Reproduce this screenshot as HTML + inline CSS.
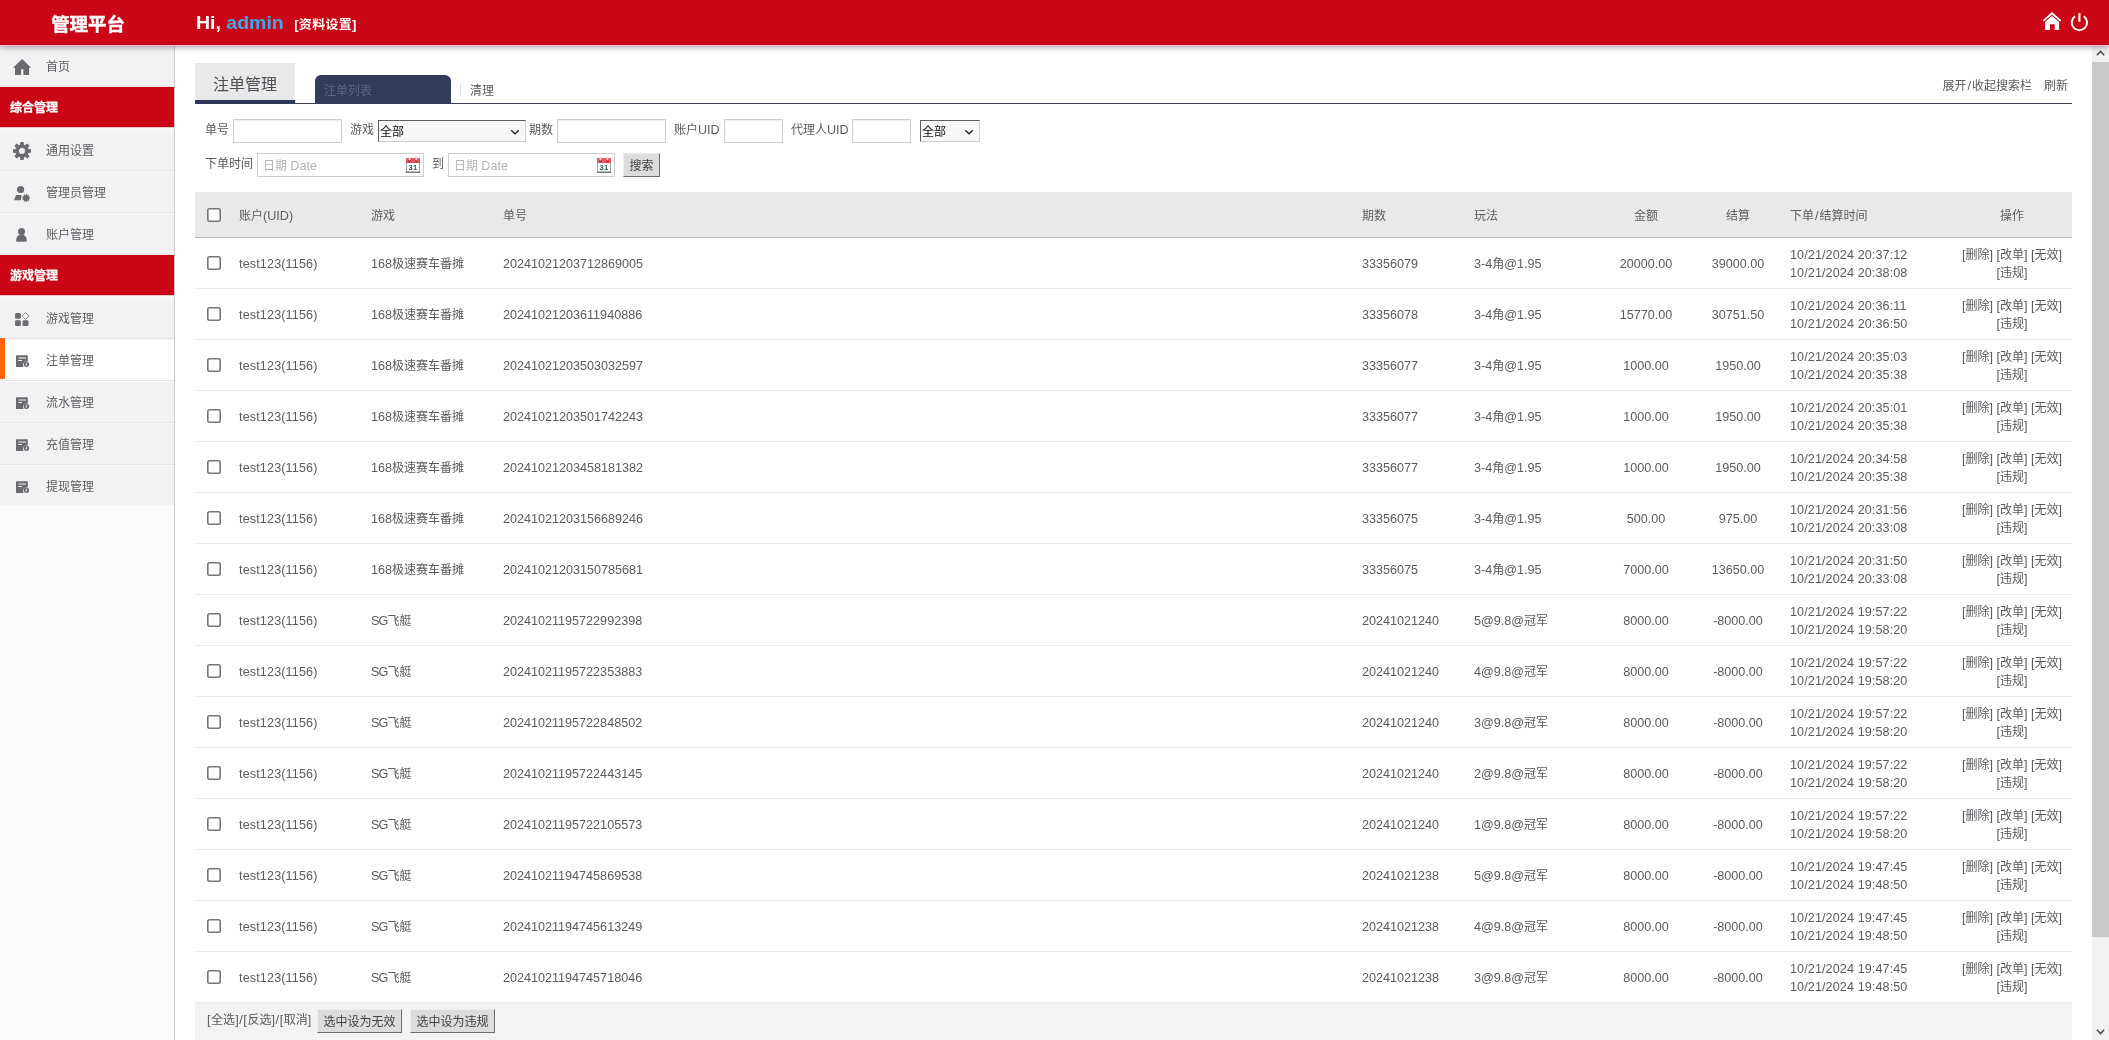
<!DOCTYPE html>
<html lang="zh-CN"><head><meta charset="utf-8"><title>管理平台</title>
<style>
*{box-sizing:border-box;margin:0;padding:0}
html,body{width:2109px;height:1040px;overflow:hidden;background:#fff}
body{position:relative;font-family:"Liberation Sans","Noto Sans CJK SC",sans-serif;font-size:12px;color:#5b5b60;line-height:18px}
.l{font-size:12.6px}
#top{position:absolute;left:0;top:0;width:2109px;height:45px;background:#cb0717;border-bottom:1px solid #b10a18;box-shadow:0 1px 0 #fbb9bf,0 2px 6px rgba(60,60,70,.5);z-index:5;color:#fff}
#top .logo{position:absolute;left:0;top:0;width:174px;height:44px;line-height:50px;text-align:center;font-size:18.4px;font-weight:bold;letter-spacing:0px;padding-left:2px;-webkit-text-stroke:.4px #fff}
#top .hi{position:absolute;left:196px;top:0;height:44px;line-height:46px;font-size:18.6px;font-weight:bold;white-space:nowrap;transform:scaleX(1.048);transform-origin:0 0}
#top .hi b{color:#38a9ea}
#top .hi em{font-style:normal;font-size:12.4px;letter-spacing:.3px;font-weight:bold;margin-left:10px;position:relative;top:0px}
#top svg{position:absolute}
#side{position:absolute;left:0;top:45px;width:175px;height:995px;background:#fbfafc;border-right:1px solid #cbcace;z-index:1}
#side ul{will-change:transform}
#side ul{list-style:none}
#side li{position:relative;height:42px;width:174px}
#side li.it{background:#f2f1f3;border-top:1px solid #f7f6f8;border-bottom:1px solid #e4e3e6;line-height:43px;padding-left:46px;color:#5e5d62}
#side li.it:last-child{height:41px;border-bottom:1px solid #f7f6f8}
#side li.it.on{background:#fff}
#side li.it.on:before{content:"";position:absolute;left:0;top:-2px;width:5px;height:41px;background:#ff6600}
#side li.it span{display:inline-block;transform:translateY(-.5px)}
#side li.hd{background:#cb0717;color:#fff;font-weight:bold;-webkit-text-stroke:.25px #fff;height:42px;line-height:43px;padding-left:10px;box-shadow:inset 0 -1px 0 #faf3f4,inset 0 -2px 0 #f8c3c8,inset 0 -3px 0 #b90a18}
.ic{position:absolute}
#sb{position:absolute;left:2092px;top:44px;width:17px;height:996px;background:#f1f0f2;z-index:2}
#sb .th{position:absolute;left:0;top:18px;width:17px;height:875px;background:#c9c8cb}
#sb svg{position:absolute;left:4px}
#main{position:absolute;left:195px;top:0;width:1877px;height:1040px;will-change:transform}
.tabs{position:absolute;left:0;top:63px;width:1877px;height:41px;border-bottom:1px solid #3a3f57}
.tabs .t1{position:absolute;left:0;top:0;width:100px;height:41px;background:#e9e8ea;border-bottom:4px solid #2f3858;font-size:16px;color:#4e4d52;text-align:center;line-height:44px}
.tabs .t2{position:absolute;left:120px;top:12px;width:136px;height:29px;background:#323b5c;border-radius:6px 6px 0 0;color:#5c6686;line-height:32px;padding-left:9px}
.tabs .sep{position:absolute;left:265px;top:21px;width:1px;height:13px;background:#dcdcdc}
.tabs .t3{position:absolute;left:275px;top:19px;line-height:18px}
.tabs .r{position:absolute;right:4px;top:14px;line-height:18px;white-space:nowrap}
.tabs .r span{margin-left:12px}
.tabs .r i{font-style:normal;padding:0 1px}
.f{position:absolute;white-space:nowrap;line-height:18px}
.inp{position:absolute;height:24px;border:1px solid #cfcfcf;background:#fff;box-shadow:inset 0 1px 2px rgba(0,0,0,.07)}
.sel{position:absolute;height:22px;border:1px solid;border-color:#5f5f5f #cfcfd2 #cfcfd2 #5f5f5f;background:#f8f8fa;color:#111;line-height:22px;padding-left:1px;font-size:12px}
.sel .chev{position:absolute;right:5px;top:8px}
.dt{position:absolute;height:24px;width:167px;border:1px solid #cfcfcf;background:#fff;color:#b4b4b4;line-height:24px;padding-left:5px}
.dt .cal{position:absolute;right:2px;top:3px}
.btn{position:absolute;height:24px;background:#dcdbdd;border:1px solid;border-color:#ececec #6e6e6e #6e6e6e #ececec;box-shadow:1px 1px 0 #9a9a9a inset -1px -1px 0;color:#444;text-align:center;line-height:24px}
table{position:absolute;left:0;top:192px;width:1877px;border-collapse:collapse;table-layout:fixed}
th{height:45px;background:#e9e8ea;border-bottom:1px solid #bcbcc0;font-weight:normal;text-align:left;padding:4px 8px 0;color:#5e5d62}
td{height:51px;border-bottom:1px solid #ececee;padding:2px 8px 0;vertical-align:middle;white-space:nowrap}
th.c,td.c{text-align:center}
td.ck,th.ck{padding:0 0 0 12px}
th.ck{padding-top:1px}
.ls{letter-spacing:.14px}
.sg{letter-spacing:-.8px}
.lt{letter-spacing:.1px}
.lf{letter-spacing:.6px}
.cb{display:block;width:14px;height:14px}
#foot{position:absolute;left:0;top:1003px;width:1877px;height:37px;background:#f3f2f4}
</style></head><body>
<div id="top">
  <div class="logo">管理平台</div>
  <div class="hi">Hi, <b>admin</b><em>[资料设置]</em></div>
  <svg style="left:2042px;top:11px" width="20" height="20" viewBox="0 0 20 20"><path d="M1.3 9.9 L10 2.3 L18.7 9.9" fill="none" stroke="#fff" stroke-width="1.9"/><path fill="#fff" d="M10 4.8 L17.1 11 L17.1 19.1 L12.7 19.1 L12.7 13.2 L8 13.2 L8 19.1 L3.1 19.1 L3.1 11 Z"/></svg>
  <svg style="left:2069px;top:11px" width="21" height="22" viewBox="0 0 21 22"><path d="M14.79 5.23 A7.65 7.65 0 1 1 6.01 5.23" fill="none" stroke="#fff" stroke-width="2"/><path d="M10.4 2.1 L10.4 10.8" stroke="#fff" stroke-width="2.1"/></svg>
</div>
<div id="side"><ul><li class="it "><svg class="ic" style="left:12px;top:12px" width="20" height="18" viewBox="0 0 20 18"><path fill="#6b6a6f" d="M10.3 1.1 L19 9.7 L17.1 9.7 L17.1 16.9 L11.4 16.9 L11.4 11.2 L9.1 11.2 L9.1 16.9 L3 16.9 L3 9.7 L0.9 9.7 Z"/></svg><span>首页</span></li><li class="hd">综合管理</li><li class="it "><svg class="ic" style="left:12px;top:11px" width="20" height="20" viewBox="0 0 20 20"><path fill="#6b6a6f" fill-rule="evenodd" d="M16.30 8.04 L19.04 8.31 L19.04 11.69 L16.30 11.96 L15.84 13.07 L17.59 15.20 L15.20 17.59 L13.07 15.84 L11.96 16.30 L11.69 19.04 L8.31 19.04 L8.04 16.30 L6.93 15.84 L4.80 17.59 L2.41 15.20 L4.16 13.07 L3.70 11.96 L0.96 11.69 L0.96 8.31 L3.70 8.04 L4.16 6.93 L2.41 4.80 L4.80 2.41 L6.93 4.16 L8.04 3.70 L8.31 0.96 L11.69 0.96 L11.96 3.70 L13.07 4.16 L15.20 2.41 L17.59 4.80 L15.84 6.93 Z M7.00 10.00 a3.00 3.00 0 1 0 6.00 0 a3.00 3.00 0 1 0 -6.00 0 Z"/></svg><span>通用设置</span></li><li class="it "><svg class="ic" style="left:13px;top:13px" width="18" height="18" viewBox="0 0 18 18"><circle cx="7.6" cy="4.5" r="3.6" fill="#6b6a6f"/><path fill="#6b6a6f" d="M3.1 10.1 L8.7 10.1 L7.8 15.2 L0.9 15.2 Z"/><path fill="#6b6a6f" d="M15.91 12.27 L16.93 12.25 L16.93 13.75 L15.91 13.73 L15.72 14.25 L16.52 14.88 L15.55 16.04 L14.78 15.36 L14.30 15.64 L14.51 16.64 L13.02 16.90 L12.87 15.89 L12.33 15.79 L11.84 16.69 L10.53 15.94 L11.07 15.07 L10.71 14.64 L9.76 15.02 L9.25 13.60 L10.21 13.28 L10.21 12.72 L9.25 12.40 L9.76 10.98 L10.71 11.36 L11.07 10.93 L10.53 10.06 L11.84 9.31 L12.33 10.21 L12.87 10.11 L13.02 9.10 L14.51 9.36 L14.30 10.36 L14.78 10.64 L15.55 9.96 L16.52 11.12 L15.72 11.75 Z"/></svg><span>管理员管理</span></li><li class="it "><svg class="ic" style="left:15px;top:12px" width="14" height="17" viewBox="0 0 14 17"><circle cx="6.5" cy="5.4" r="3.5" fill="#6b6a6f"/><path fill="#6b6a6f" d="M1.1 14.5 Q1.1 9.2 6.45 8.6 Q11.8 9.2 11.8 14.5 Q11.8 15.7 10.6 15.7 L2.3 15.7 Q1.1 15.7 1.1 14.5 Z"/></svg><span>账户管理</span></li><li class="hd">游戏管理</li><li class="it "><svg class="ic" style="left:15px;top:14px" width="15" height="15" viewBox="0 0 15 15"><rect x="0.1" y="0.9" width="5.8" height="5.8" rx="1.3" fill="#6b6a6f"/><rect x="0.1" y="8.3" width="5.8" height="5.7" rx="1.3" fill="#6b6a6f"/><rect x="7.5" y="8.3" width="5.9" height="5.7" rx="1.3" fill="#6b6a6f"/><path d="M10.5 0.6 L13.9 4 L10.5 7.4 L7.1 4 Z" fill="none" stroke="#6b6a6f" stroke-width="0.8" stroke-linejoin="round"/></svg><span>游戏管理</span></li><li class="it on"><svg class="ic" style="left:16px;top:15px" width="14" height="13" viewBox="0 0 14 13"><path fill="#6b6a6f" d="M0.8 0.2 L11 0.2 Q11.8 0.2 11.8 1 L11.8 6.4 Q8 5.6 7 9 Q6.8 10.6 7.6 12 L0 12 L0 1 Q0 0.2 0.8 0.2 Z M2.4 2.4 L2.4 3.6 L10 3.6 L10 2.4 Z M2.4 5 L2.4 6 L6 6 L6 5 Z"/><circle cx="10.4" cy="9.3" r="2.7" fill="#6b6a6f"/><path d="M10.9 7.8 L9.9 10.8" stroke="#fff" stroke-width="0.9"/></svg><span>注单管理</span></li><li class="it "><svg class="ic" style="left:16px;top:15px" width="14" height="13" viewBox="0 0 14 13"><path fill="#6b6a6f" d="M0.8 0.2 L11 0.2 Q11.8 0.2 11.8 1 L11.8 6.4 Q8 5.6 7 9 Q6.8 10.6 7.6 12 L0 12 L0 1 Q0 0.2 0.8 0.2 Z M2.4 2.4 L2.4 3.6 L10 3.6 L10 2.4 Z M2.4 5 L2.4 6 L6 6 L6 5 Z"/><circle cx="10.4" cy="9.3" r="2.7" fill="#6b6a6f"/><path d="M10.9 7.8 L9.9 10.8" stroke="#fff" stroke-width="0.9"/></svg><span>流水管理</span></li><li class="it "><svg class="ic" style="left:16px;top:15px" width="14" height="13" viewBox="0 0 14 13"><path fill="#6b6a6f" d="M0.8 0.2 L11 0.2 Q11.8 0.2 11.8 1 L11.8 6.4 Q8 5.6 7 9 Q6.8 10.6 7.6 12 L0 12 L0 1 Q0 0.2 0.8 0.2 Z M2.4 2.4 L2.4 3.6 L10 3.6 L10 2.4 Z M2.4 5 L2.4 6 L6 6 L6 5 Z"/><circle cx="10.4" cy="9.3" r="2.7" fill="#6b6a6f"/><path d="M10.9 7.8 L9.9 10.8" stroke="#fff" stroke-width="0.9"/></svg><span>充值管理</span></li><li class="it "><svg class="ic" style="left:16px;top:15px" width="14" height="13" viewBox="0 0 14 13"><path fill="#6b6a6f" d="M0.8 0.2 L11 0.2 Q11.8 0.2 11.8 1 L11.8 6.4 Q8 5.6 7 9 Q6.8 10.6 7.6 12 L0 12 L0 1 Q0 0.2 0.8 0.2 Z M2.4 2.4 L2.4 3.6 L10 3.6 L10 2.4 Z M2.4 5 L2.4 6 L6 6 L6 5 Z"/><circle cx="10.4" cy="9.3" r="2.7" fill="#6b6a6f"/><path d="M10.9 7.8 L9.9 10.8" stroke="#fff" stroke-width="0.9"/></svg><span>提现管理</span></li></ul></div>
<div id="sb"><svg style="top:6px" width="9" height="6" viewBox="0 0 9 6"><path d="M0.8 5.2 L4.5 1.4 L8.2 5.2" fill="none" stroke="#4f4f52" stroke-width="1.5"/></svg><div class="th"></div><svg style="top:985px" width="9" height="6" viewBox="0 0 9 6"><path d="M0.8 0.8 L4.5 4.6 L8.2 0.8" fill="none" stroke="#4f4f52" stroke-width="1.5"/></svg></div>
<div id="main">
  <div class="tabs"><div class="t1">注单管理</div><div class="t2">注单列表</div><div class="sep"></div><div class="t3">清理</div><div class="r">展开<i class="l">/</i>收起搜索栏<span>刷新</span></div></div>
  <div class="f" style="left:10px;top:121px">单号</div><div class="inp" style="left:38px;top:119px;width:109px"></div>
  <div class="f" style="left:155px;top:121px">游戏</div><div class="sel" style="left:183px;top:120px;width:148px">全部<svg class="chev" width="10" height="6" viewBox="0 0 10 6"><path d="M1.2 1.2 L5 4.8 L8.8 1.2" fill="none" stroke="#222" stroke-width="1.3"/></svg></div>
  <div class="f" style="left:334px;top:121px">期数</div><div class="inp" style="left:362px;top:119px;width:109px"></div>
  <div class="f" style="left:479px;top:121px">账户<span class="l">UID</span></div><div class="inp" style="left:529px;top:119px;width:59px"></div>
  <div class="f" style="left:596px;top:121px">代理人<span class="l">UID</span></div><div class="inp" style="left:657px;top:119px;width:59px"></div>
  <div class="sel" style="left:725px;top:120px;width:60px">全部<svg class="chev" width="10" height="6" viewBox="0 0 10 6"><path d="M1.2 1.2 L5 4.8 L8.8 1.2" fill="none" stroke="#222" stroke-width="1.3"/></svg></div>
  <div class="f" style="left:10px;top:155px">下单时间</div><div class="dt" style="left:62px;top:153px">日期 <span class="l">Date</span><svg class="cal" width="16" height="16" viewBox="0 0 16 16"><rect x="1.4" y="1.6" width="13.2" height="13.6" fill="#fff" stroke="#8f8a8c" stroke-width="0.8"/><rect x="1" y="1.2" width="14" height="4.6" fill="#ea5560"/><rect x="1" y="4.9" width="14" height="0.9" fill="#d9414d"/><rect x="0.9" y="14.7" width="14.2" height="1" fill="#5e5a5c"/><rect x="3.4" y="3" width="2.2" height="1.7" rx="0.8" fill="#8c1218"/><rect x="10.2" y="3" width="2.2" height="1.7" rx="0.8" fill="#8c1218"/><rect x="3.7" y="0.1" width="1.6" height="3.4" rx="0.8" fill="#fde4e4" stroke="#d88" stroke-width="0.4"/><rect x="10.5" y="0.1" width="1.6" height="3.4" rx="0.8" fill="#fde4e4" stroke="#d88" stroke-width="0.4"/><text x="8" y="12.9" font-family="Liberation Sans, sans-serif" font-size="7.6" font-weight="bold" text-anchor="middle" letter-spacing="0.4" fill="#2e5c52">31</text></svg></div>
  <div class="f" style="left:237px;top:155px">到</div><div class="dt" style="left:253px;top:153px">日期 <span class="l">Date</span><svg class="cal" width="16" height="16" viewBox="0 0 16 16"><rect x="1.4" y="1.6" width="13.2" height="13.6" fill="#fff" stroke="#8f8a8c" stroke-width="0.8"/><rect x="1" y="1.2" width="14" height="4.6" fill="#ea5560"/><rect x="1" y="4.9" width="14" height="0.9" fill="#d9414d"/><rect x="0.9" y="14.7" width="14.2" height="1" fill="#5e5a5c"/><rect x="3.4" y="3" width="2.2" height="1.7" rx="0.8" fill="#8c1218"/><rect x="10.2" y="3" width="2.2" height="1.7" rx="0.8" fill="#8c1218"/><rect x="3.7" y="0.1" width="1.6" height="3.4" rx="0.8" fill="#fde4e4" stroke="#d88" stroke-width="0.4"/><rect x="10.5" y="0.1" width="1.6" height="3.4" rx="0.8" fill="#fde4e4" stroke="#d88" stroke-width="0.4"/><text x="8" y="12.9" font-family="Liberation Sans, sans-serif" font-size="7.6" font-weight="bold" text-anchor="middle" letter-spacing="0.4" fill="#2e5c52">31</text></svg></div>
  <div class="btn" style="left:428px;top:153px;width:37px">搜索</div>
  <table><colgroup><col style="width:36px"><col style="width:132px"><col style="width:132px"><col><col style="width:112px"><col style="width:132px"><col style="width:96px"><col style="width:88px"><col style="width:170px"><col style="width:120px"></colgroup>
  <tr><th class="ck"><svg class="cb" width="14" height="14" viewBox="0 0 14 14"><rect x="0.8" y="0.8" width="12.4" height="12.4" rx="1.7" fill="#fff" stroke="#77767d" stroke-width="1.6"/></svg></th><th>账户<span class="l">(UID)</span></th><th>游戏</th><th>单号</th><th>期数</th><th>玩法</th><th class="c">金额</th><th class="c">结算</th><th>下单<span class="l" style="padding:0 1px">/</span>结算时间</th><th class="c">操作</th></tr>
  <tr><td class="ck"><svg class="cb" width="14" height="14" viewBox="0 0 14 14"><rect x="0.8" y="0.8" width="12.4" height="12.4" rx="1.7" fill="#fff" stroke="#77767d" stroke-width="1.6"/></svg></td><td><span class="l ls">test123(1156)</span></td><td><span class="l">168</span>极速赛车番摊</td><td><span class="l">20241021203712869005</span></td><td><span class="l">33356079</span></td><td><span class="l">3-4</span>角<span class="l">@1.95</span></td><td class="c"><span class="l">20000.00</span></td><td class="c"><span class="l">39000.00</span></td><td><span class="l lt">10/21/2024 20:37:12</span><br><span class="l lt">10/21/2024 20:38:08</span></td><td class="c op"><span class="l">[</span>删除<span class="l">] [</span>改单<span class="l">] [</span>无效<span class="l">]</span><br><span class="l">[</span>违规<span class="l">]</span></td></tr>
<tr><td class="ck"><svg class="cb" width="14" height="14" viewBox="0 0 14 14"><rect x="0.8" y="0.8" width="12.4" height="12.4" rx="1.7" fill="#fff" stroke="#77767d" stroke-width="1.6"/></svg></td><td><span class="l ls">test123(1156)</span></td><td><span class="l">168</span>极速赛车番摊</td><td><span class="l">20241021203611940886</span></td><td><span class="l">33356078</span></td><td><span class="l">3-4</span>角<span class="l">@1.95</span></td><td class="c"><span class="l">15770.00</span></td><td class="c"><span class="l">30751.50</span></td><td><span class="l lt">10/21/2024 20:36:11</span><br><span class="l lt">10/21/2024 20:36:50</span></td><td class="c op"><span class="l">[</span>删除<span class="l">] [</span>改单<span class="l">] [</span>无效<span class="l">]</span><br><span class="l">[</span>违规<span class="l">]</span></td></tr>
<tr><td class="ck"><svg class="cb" width="14" height="14" viewBox="0 0 14 14"><rect x="0.8" y="0.8" width="12.4" height="12.4" rx="1.7" fill="#fff" stroke="#77767d" stroke-width="1.6"/></svg></td><td><span class="l ls">test123(1156)</span></td><td><span class="l">168</span>极速赛车番摊</td><td><span class="l">20241021203503032597</span></td><td><span class="l">33356077</span></td><td><span class="l">3-4</span>角<span class="l">@1.95</span></td><td class="c"><span class="l">1000.00</span></td><td class="c"><span class="l">1950.00</span></td><td><span class="l lt">10/21/2024 20:35:03</span><br><span class="l lt">10/21/2024 20:35:38</span></td><td class="c op"><span class="l">[</span>删除<span class="l">] [</span>改单<span class="l">] [</span>无效<span class="l">]</span><br><span class="l">[</span>违规<span class="l">]</span></td></tr>
<tr><td class="ck"><svg class="cb" width="14" height="14" viewBox="0 0 14 14"><rect x="0.8" y="0.8" width="12.4" height="12.4" rx="1.7" fill="#fff" stroke="#77767d" stroke-width="1.6"/></svg></td><td><span class="l ls">test123(1156)</span></td><td><span class="l">168</span>极速赛车番摊</td><td><span class="l">20241021203501742243</span></td><td><span class="l">33356077</span></td><td><span class="l">3-4</span>角<span class="l">@1.95</span></td><td class="c"><span class="l">1000.00</span></td><td class="c"><span class="l">1950.00</span></td><td><span class="l lt">10/21/2024 20:35:01</span><br><span class="l lt">10/21/2024 20:35:38</span></td><td class="c op"><span class="l">[</span>删除<span class="l">] [</span>改单<span class="l">] [</span>无效<span class="l">]</span><br><span class="l">[</span>违规<span class="l">]</span></td></tr>
<tr><td class="ck"><svg class="cb" width="14" height="14" viewBox="0 0 14 14"><rect x="0.8" y="0.8" width="12.4" height="12.4" rx="1.7" fill="#fff" stroke="#77767d" stroke-width="1.6"/></svg></td><td><span class="l ls">test123(1156)</span></td><td><span class="l">168</span>极速赛车番摊</td><td><span class="l">20241021203458181382</span></td><td><span class="l">33356077</span></td><td><span class="l">3-4</span>角<span class="l">@1.95</span></td><td class="c"><span class="l">1000.00</span></td><td class="c"><span class="l">1950.00</span></td><td><span class="l lt">10/21/2024 20:34:58</span><br><span class="l lt">10/21/2024 20:35:38</span></td><td class="c op"><span class="l">[</span>删除<span class="l">] [</span>改单<span class="l">] [</span>无效<span class="l">]</span><br><span class="l">[</span>违规<span class="l">]</span></td></tr>
<tr><td class="ck"><svg class="cb" width="14" height="14" viewBox="0 0 14 14"><rect x="0.8" y="0.8" width="12.4" height="12.4" rx="1.7" fill="#fff" stroke="#77767d" stroke-width="1.6"/></svg></td><td><span class="l ls">test123(1156)</span></td><td><span class="l">168</span>极速赛车番摊</td><td><span class="l">20241021203156689246</span></td><td><span class="l">33356075</span></td><td><span class="l">3-4</span>角<span class="l">@1.95</span></td><td class="c"><span class="l">500.00</span></td><td class="c"><span class="l">975.00</span></td><td><span class="l lt">10/21/2024 20:31:56</span><br><span class="l lt">10/21/2024 20:33:08</span></td><td class="c op"><span class="l">[</span>删除<span class="l">] [</span>改单<span class="l">] [</span>无效<span class="l">]</span><br><span class="l">[</span>违规<span class="l">]</span></td></tr>
<tr><td class="ck"><svg class="cb" width="14" height="14" viewBox="0 0 14 14"><rect x="0.8" y="0.8" width="12.4" height="12.4" rx="1.7" fill="#fff" stroke="#77767d" stroke-width="1.6"/></svg></td><td><span class="l ls">test123(1156)</span></td><td><span class="l">168</span>极速赛车番摊</td><td><span class="l">20241021203150785681</span></td><td><span class="l">33356075</span></td><td><span class="l">3-4</span>角<span class="l">@1.95</span></td><td class="c"><span class="l">7000.00</span></td><td class="c"><span class="l">13650.00</span></td><td><span class="l lt">10/21/2024 20:31:50</span><br><span class="l lt">10/21/2024 20:33:08</span></td><td class="c op"><span class="l">[</span>删除<span class="l">] [</span>改单<span class="l">] [</span>无效<span class="l">]</span><br><span class="l">[</span>违规<span class="l">]</span></td></tr>
<tr><td class="ck"><svg class="cb" width="14" height="14" viewBox="0 0 14 14"><rect x="0.8" y="0.8" width="12.4" height="12.4" rx="1.7" fill="#fff" stroke="#77767d" stroke-width="1.6"/></svg></td><td><span class="l ls">test123(1156)</span></td><td><span class="l sg">SG</span>飞艇</td><td><span class="l">20241021195722992398</span></td><td><span class="l">20241021240</span></td><td><span class="l">5@9.8@</span>冠军</td><td class="c"><span class="l">8000.00</span></td><td class="c"><span class="l">-8000.00</span></td><td><span class="l lt">10/21/2024 19:57:22</span><br><span class="l lt">10/21/2024 19:58:20</span></td><td class="c op"><span class="l">[</span>删除<span class="l">] [</span>改单<span class="l">] [</span>无效<span class="l">]</span><br><span class="l">[</span>违规<span class="l">]</span></td></tr>
<tr><td class="ck"><svg class="cb" width="14" height="14" viewBox="0 0 14 14"><rect x="0.8" y="0.8" width="12.4" height="12.4" rx="1.7" fill="#fff" stroke="#77767d" stroke-width="1.6"/></svg></td><td><span class="l ls">test123(1156)</span></td><td><span class="l sg">SG</span>飞艇</td><td><span class="l">20241021195722353883</span></td><td><span class="l">20241021240</span></td><td><span class="l">4@9.8@</span>冠军</td><td class="c"><span class="l">8000.00</span></td><td class="c"><span class="l">-8000.00</span></td><td><span class="l lt">10/21/2024 19:57:22</span><br><span class="l lt">10/21/2024 19:58:20</span></td><td class="c op"><span class="l">[</span>删除<span class="l">] [</span>改单<span class="l">] [</span>无效<span class="l">]</span><br><span class="l">[</span>违规<span class="l">]</span></td></tr>
<tr><td class="ck"><svg class="cb" width="14" height="14" viewBox="0 0 14 14"><rect x="0.8" y="0.8" width="12.4" height="12.4" rx="1.7" fill="#fff" stroke="#77767d" stroke-width="1.6"/></svg></td><td><span class="l ls">test123(1156)</span></td><td><span class="l sg">SG</span>飞艇</td><td><span class="l">20241021195722848502</span></td><td><span class="l">20241021240</span></td><td><span class="l">3@9.8@</span>冠军</td><td class="c"><span class="l">8000.00</span></td><td class="c"><span class="l">-8000.00</span></td><td><span class="l lt">10/21/2024 19:57:22</span><br><span class="l lt">10/21/2024 19:58:20</span></td><td class="c op"><span class="l">[</span>删除<span class="l">] [</span>改单<span class="l">] [</span>无效<span class="l">]</span><br><span class="l">[</span>违规<span class="l">]</span></td></tr>
<tr><td class="ck"><svg class="cb" width="14" height="14" viewBox="0 0 14 14"><rect x="0.8" y="0.8" width="12.4" height="12.4" rx="1.7" fill="#fff" stroke="#77767d" stroke-width="1.6"/></svg></td><td><span class="l ls">test123(1156)</span></td><td><span class="l sg">SG</span>飞艇</td><td><span class="l">20241021195722443145</span></td><td><span class="l">20241021240</span></td><td><span class="l">2@9.8@</span>冠军</td><td class="c"><span class="l">8000.00</span></td><td class="c"><span class="l">-8000.00</span></td><td><span class="l lt">10/21/2024 19:57:22</span><br><span class="l lt">10/21/2024 19:58:20</span></td><td class="c op"><span class="l">[</span>删除<span class="l">] [</span>改单<span class="l">] [</span>无效<span class="l">]</span><br><span class="l">[</span>违规<span class="l">]</span></td></tr>
<tr><td class="ck"><svg class="cb" width="14" height="14" viewBox="0 0 14 14"><rect x="0.8" y="0.8" width="12.4" height="12.4" rx="1.7" fill="#fff" stroke="#77767d" stroke-width="1.6"/></svg></td><td><span class="l ls">test123(1156)</span></td><td><span class="l sg">SG</span>飞艇</td><td><span class="l">20241021195722105573</span></td><td><span class="l">20241021240</span></td><td><span class="l">1@9.8@</span>冠军</td><td class="c"><span class="l">8000.00</span></td><td class="c"><span class="l">-8000.00</span></td><td><span class="l lt">10/21/2024 19:57:22</span><br><span class="l lt">10/21/2024 19:58:20</span></td><td class="c op"><span class="l">[</span>删除<span class="l">] [</span>改单<span class="l">] [</span>无效<span class="l">]</span><br><span class="l">[</span>违规<span class="l">]</span></td></tr>
<tr><td class="ck"><svg class="cb" width="14" height="14" viewBox="0 0 14 14"><rect x="0.8" y="0.8" width="12.4" height="12.4" rx="1.7" fill="#fff" stroke="#77767d" stroke-width="1.6"/></svg></td><td><span class="l ls">test123(1156)</span></td><td><span class="l sg">SG</span>飞艇</td><td><span class="l">20241021194745869538</span></td><td><span class="l">20241021238</span></td><td><span class="l">5@9.8@</span>冠军</td><td class="c"><span class="l">8000.00</span></td><td class="c"><span class="l">-8000.00</span></td><td><span class="l lt">10/21/2024 19:47:45</span><br><span class="l lt">10/21/2024 19:48:50</span></td><td class="c op"><span class="l">[</span>删除<span class="l">] [</span>改单<span class="l">] [</span>无效<span class="l">]</span><br><span class="l">[</span>违规<span class="l">]</span></td></tr>
<tr><td class="ck"><svg class="cb" width="14" height="14" viewBox="0 0 14 14"><rect x="0.8" y="0.8" width="12.4" height="12.4" rx="1.7" fill="#fff" stroke="#77767d" stroke-width="1.6"/></svg></td><td><span class="l ls">test123(1156)</span></td><td><span class="l sg">SG</span>飞艇</td><td><span class="l">20241021194745613249</span></td><td><span class="l">20241021238</span></td><td><span class="l">4@9.8@</span>冠军</td><td class="c"><span class="l">8000.00</span></td><td class="c"><span class="l">-8000.00</span></td><td><span class="l lt">10/21/2024 19:47:45</span><br><span class="l lt">10/21/2024 19:48:50</span></td><td class="c op"><span class="l">[</span>删除<span class="l">] [</span>改单<span class="l">] [</span>无效<span class="l">]</span><br><span class="l">[</span>违规<span class="l">]</span></td></tr>
<tr><td class="ck"><svg class="cb" width="14" height="14" viewBox="0 0 14 14"><rect x="0.8" y="0.8" width="12.4" height="12.4" rx="1.7" fill="#fff" stroke="#77767d" stroke-width="1.6"/></svg></td><td><span class="l ls">test123(1156)</span></td><td><span class="l sg">SG</span>飞艇</td><td><span class="l">20241021194745718046</span></td><td><span class="l">20241021238</span></td><td><span class="l">3@9.8@</span>冠军</td><td class="c"><span class="l">8000.00</span></td><td class="c"><span class="l">-8000.00</span></td><td><span class="l lt">10/21/2024 19:47:45</span><br><span class="l lt">10/21/2024 19:48:50</span></td><td class="c op"><span class="l">[</span>删除<span class="l">] [</span>改单<span class="l">] [</span>无效<span class="l">]</span><br><span class="l">[</span>违规<span class="l">]</span></td></tr>
</table>
  <div id="foot"><div class="f" style="left:12px;top:8px"><span class="l lf">[</span>全选<span class="l lf">]/[</span>反选<span class="l lf">]/[</span>取消<span class="l lf">]</span></div><div class="btn" style="left:122px;top:6px;width:85px">选中设为无效</div><div class="btn" style="left:215px;top:6px;width:85px">选中设为违规</div></div>
</div>
</body></html>
